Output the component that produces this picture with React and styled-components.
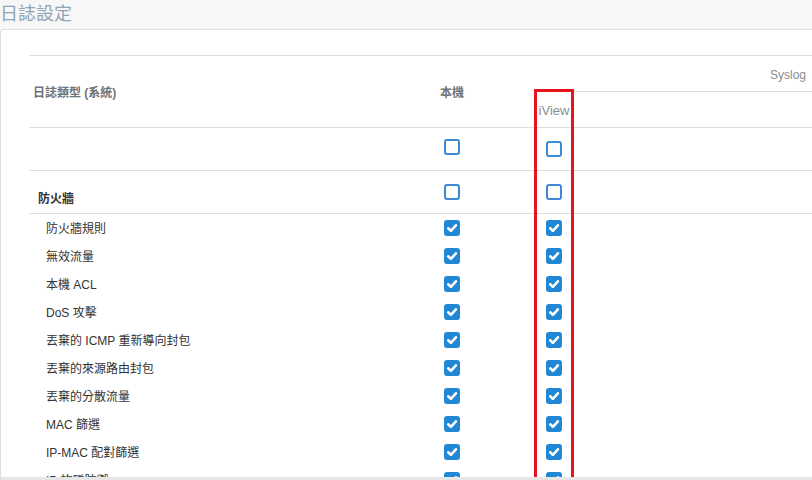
import React from "react";
import styled, { createGlobalStyle } from "styled-components";

const Global = createGlobalStyle`
  html, body { margin: 0; padding: 0; background: #f7f7f7; overflow: hidden; }
  body { font-family: "Liberation Sans", "Noto Sans CJK TC", sans-serif; width: 812px; height: 480px; }
`;

const Page = styled.div`
  width: 812px;
  height: 480px;
  overflow: hidden;
`;

const Title = styled.h1`
  margin: 0;
  height: 29px;
  line-height: 29px;
  padding-left: 0;
  font-size: 18px;
  font-weight: normal;
  color: #91a4b6;
  font-family: "Liberation Sans", "Noto Sans CJK TC", sans-serif;
`;

const Panel = styled.section`
  width: 840px;
  background: #fff;
  border: 1px solid #dddddd;
  border-radius: 3px 0 0 0;
  box-sizing: border-box;
`;

const ScrollArea = styled.div`
  height: 447px;
  overflow: hidden;
  padding: 25px 0 0 28px;
  box-sizing: border-box;
`;

const Track = styled.div`
  height: 8px;
  background: #e6e6e6;
`;

const TableWrap = styled.div`
  position: relative;
  width: 783px;
`;

const Table = styled.table`
  border-collapse: collapse;
  table-layout: fixed;
  width: 783px;
  border-top: 1px solid #dddddd;
`;

const Th = styled.th`
  height: ${(p) => p.$h || 35}px;
  padding: ${(p) => p.$pt || 0}px ${(p) => p.$pr || 4}px 0 4px;
  text-align: ${(p) => p.$align || "center"};
  font-size: ${(p) => p.$size || 12}px;
  font-weight: ${(p) => (p.$bold ? "bold" : "normal")};
  color: ${(p) => (p.$bold ? "#6e7378" : "#8a8d91")};
  border-bottom: 1px solid #dddddd;
  vertical-align: middle;
  box-sizing: border-box;
  white-space: nowrap;
`;

const Tr = styled.tr`
  border-bottom: ${(p) => (p.$line ? "1px solid #dddddd" : "none")};
`;

const Td = styled.td`
  height: ${(p) => p.$h || 28}px;
  padding: ${(p) => p.$pt || 0}px 0 0 ${(p) => p.$pl || 0}px;
  text-align: ${(p) => p.$align || "left"};
  font-size: 12px;
  font-weight: ${(p) => (p.$bold ? "bold" : "normal")};
  color: #333;
  vertical-align: middle;
  white-space: nowrap;
  box-sizing: border-box;
`;

const Box = styled.span`
  display: block;
  margin: 0 auto;
  width: 16px;
  height: 16px;
  box-sizing: border-box;
  border-radius: 3px;
  border: 2px solid #3b8ad4;
  background: ${(p) => (p.$on ? "#1f87d3" : "#fff")};
  border-color: ${(p) => (p.$on ? "#1f87d3" : "#3b8ad4")};
  position: relative;
  top: ${(p) => p.$dy || 0}px;
  svg { position: absolute; left: -2px; top: -2px; }
`;

const Highlight = styled.div`
  position: absolute;
  left: 505px;
  top: 34px;
  width: 40px;
  height: 600px;
  border: 3px solid #e8141c;
  box-sizing: border-box;
  pointer-events: none;
`;

function Check({ on, dy }) {
  return (
    <Box $on={on} $dy={dy}>
      {on && (
        <svg width="16" height="16" viewBox="0 0 16 16">
          <path d="M4.2 8.3 L6.9 10.9 L11.9 5.3" fill="none" stroke="#fff" strokeWidth="2.6" strokeLinecap="round" strokeLinejoin="round" />
        </svg>
      )}
    </Box>
  );
}

const items = [
  "防火牆規則",
  "無效流量",
  "本機 ACL",
  "DoS 攻擊",
  "丟棄的 ICMP 重新導向封包",
  "丟棄的來源路由封包",
  "丟棄的分散流量",
  "MAC 篩選",
  "IP-MAC 配對篩選",
  "IP 詐騙防禦",
];

export default function App() {
  return (
    <Page>
      <Global />
      <Title>日誌設定</Title>
      <Panel>
        <ScrollArea>
          <TableWrap>
            <Table>
              <colgroup>
                <col style={{ width: 341 }} />
                <col style={{ width: 164 }} />
                <col style={{ width: 40 }} />
                <col style={{ width: 238 }} />
              </colgroup>
              <thead>
                <tr>
                  <Th rowSpan={2} $align="left" $bold>日誌類型 (系統)</Th>
                  <Th rowSpan={2} $bold>本機</Th>
                  <Th colSpan={2} $align="right" $pr={6} $h={36} $pt={3}>Syslog</Th>
                </tr>
                <tr>
                  <Th $size={13} $h={36} $pt={2}>iView</Th>
                  <Th $h={36} />
                </tr>
              </thead>
              <tbody>
                <Tr $line>
                  <Td $h={43} />
                  <Td $h={43}><Check dy={-2} /></Td>
                  <Td $h={43}><Check /></Td>
                  <Td $h={43} />
                </Tr>
                <Tr $line>
                  <Td $h={43} $pl={9} $pt={10} $bold>防火牆</Td>
                  <Td $h={43}><Check /></Td>
                  <Td $h={43}><Check /></Td>
                  <Td $h={43} />
                </Tr>
                {items.map((t) => (
                  <Tr key={t}>
                    <Td $pl={17}>{t}</Td>
                    <Td><Check on /></Td>
                    <Td><Check on /></Td>
                    <Td />
                  </Tr>
                ))}
              </tbody>
            </Table>
            <Highlight />
          </TableWrap>
        </ScrollArea>
        <Track />
      </Panel>
    </Page>
  );
}
